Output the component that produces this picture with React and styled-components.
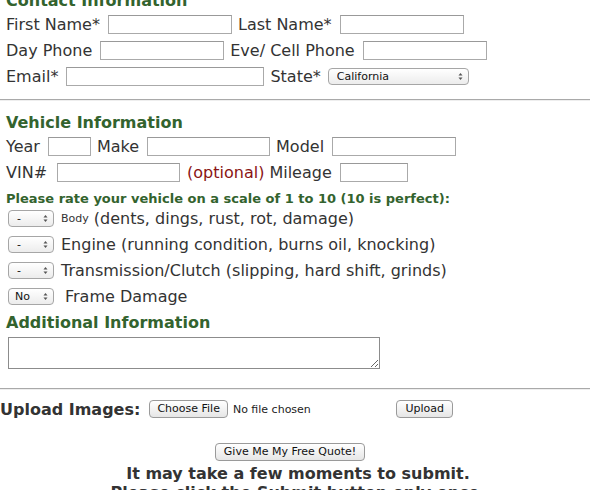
import React from 'react'
import styled, { createGlobalStyle } from 'styled-components'

const Global = createGlobalStyle`
  html, body {
    margin: 0;
    padding: 0;
    background: #fff;
  }
  body {
    font-family: "DejaVu Sans", Verdana, sans-serif;
    color: #333;
  }
`

const Page = styled.div`
  width: 590px;
  height: 490px;
  overflow: hidden;
`

const Section = styled.div`
  padding-left: 6px;
  margin-top: ${(p) => p.top || 0}px;
`

const Heading = styled.h3`
  margin: ${(p) => p.mt || 0}px 0 0 0;
  font-size: 16px;
  font-weight: bold;
  line-height: 20px;
  color: #33632e;
`

const Note = styled.div`
  margin-top: 6px;
  font-size: 13px;
  font-weight: bold;
  line-height: 13px;
  color: #33632e;
`

const Row = styled.div`
  display: flex;
  align-items: center;
  height: ${(p) => p.h || 26}px;
  font-size: 16px;
  white-space: nowrap;
`

const Label = styled.span`
  font-size: ${(p) => p.size || 16}px;
  color: ${(p) => p.color || '#333'};
  margin-left: ${(p) => p.ml || 0}px;
`

const Input = styled.input`
  box-sizing: border-box;
  width: ${(p) => p.w}px;
  height: 19px;
  margin: 0 6px 0 ${(p) => (p.ml == null ? 8 : p.ml)}px;
  padding: 0 3px;
  border: 1px solid #aaa;
  border-top-color: #999;
  background: #fff;
  font: 12px "DejaVu Sans", sans-serif;
  outline: none;
`

const SelectWrap = styled.span`
  position: relative;
  display: inline-flex;
  margin: 0 ${(p) => (p.mr == null ? 7 : p.mr)}px 0 ${(p) => p.ml || 0}px;
`

const Select = styled.select`
  appearance: none;
  -webkit-appearance: none;
  box-sizing: border-box;
  width: ${(p) => p.w}px;
  height: 17px;
  padding: 0 0 0 ${(p) => p.pl || 8}px;
  border: 1px solid #a6a6a6;
  border-radius: 4px;
  background: linear-gradient(#ffffff, #ececec);
  font: 11px "DejaVu Sans", sans-serif;
  color: #111;
  line-height: 15px;
  outline: none;
`

const Arrows = styled.svg`
  position: absolute;
  right: 6px;
  top: 4px;
  width: 5px;
  height: 9px;
  pointer-events: none;
`

const Rule = styled.hr`
  margin: ${(p) => p.mt}px 0 0 0;
  height: 0;
  border: none;
  border-top: 1px solid #a9a9a9;
  border-bottom: 1px solid #eeeeee;
`

const TextArea = styled.textarea`
  display: block;
  box-sizing: border-box;
  width: 372px;
  height: 32px;
  margin: 4px 0 0 2px;
  border: 1px solid #8c8c8c;
  resize: both;
  font: 12px "DejaVu Sans", sans-serif;
`

const UploadRow = styled.div`
  display: flex;
  align-items: center;
  height: 20px;
  margin-top: 9px;
`

const UploadTitle = styled.span`
  font-size: 16px;
  font-weight: bold;
  color: #333;
  margin-right: 9px;
`

const FileGroup = styled.div`
  display: flex;
  align-items: center;
  width: 247px;
`

const Button = styled.button`
  box-sizing: border-box;
  height: 18px;
  padding: 0 ${(p) => p.px || 7}px;
  border: 1px solid #9a9a9a;
  border-radius: 4px;
  background: linear-gradient(#ffffff, #e6e6e6);
  font: 11px "DejaVu Sans", sans-serif;
  color: #111;
  line-height: 16px;
`

const FileNote = styled.span`
  font-size: 11px;
  color: #222;
  margin-left: 5px;
`

const Submit = styled.div`
  display: flex;
  flex-direction: column;
  align-items: center;
  margin-top: 24px;
`

const SubmitText = styled.div`
  margin-top: 3px;
  padding-left: 6px;
  font-size: 16px;
  font-weight: bold;
  line-height: 19px;
  color: #333;
  text-align: center;
`

const UpDown = () => (
  <Arrows viewBox="0 0 5 9">
    <path d="M0.5 3.5 L2.5 1 L4.5 3.5 Z" fill="#555" />
    <path d="M0.5 5.5 L2.5 8 L4.5 5.5 Z" fill="#555" />
  </Arrows>
)

const Drop = ({ w, value, pl, ml, mr }) => (
  <SelectWrap ml={ml} mr={mr}>
    <Select w={w} pl={pl} defaultValue={value}>
      <option>{value}</option>
    </Select>
    <UpDown />
  </SelectWrap>
)

export default function App() {
  return (
    <Page>
      <Global />
      <Section top={-9}>
        <Heading>Contact Information</Heading>
        <Row>
          <Label>First Name*</Label>
          <Input w={124} />
          <Label>Last Name*</Label>
          <Input w={124} />
        </Row>
        <Row>
          <Label>Day Phone</Label>
          <Input w={124} />
          <Label>Eve/ Cell Phone</Label>
          <Input w={124} />
        </Row>
        <Row>
          <Label>Email*</Label>
          <Input w={198} />
          <Label>State*</Label>
          <Drop w={141} value="California" ml={7} />
        </Row>
      </Section>

      <Rule mt={10} />

      <Section>
        <Heading mt={12}>Vehicle Information</Heading>
        <Row>
          <Label>Year</Label>
          <Input w={43} />
          <Label>Make</Label>
          <Input w={123} />
          <Label>Model</Label>
          <Input w={124} />
        </Row>
        <Row h={27}>
          <Label>VIN#</Label>
          <Input w={123} ml={10} />
          <Label ml={1} color="#8a1414">(optional)</Label>
          <Label ml={5}>Mileage</Label>
          <Input w={68} />
        </Row>
        <Note>Please rate your vehicle on a scale of 1 to 10 (10 is perfect):</Note>
        <Row>
          <Drop w={46} value="-" ml={2} />
          <Label size={11}>Body</Label>
          <Label>&nbsp;(dents, dings, rust, rot, damage)</Label>
        </Row>
        <Row>
          <Drop w={46} value="-" ml={2} />
          <Label>Engine (running condition, burns oil, knocking)</Label>
        </Row>
        <Row>
          <Drop w={46} value="-" ml={2} />
          <Label>Transmission/Clutch (slipping, hard shift, grinds)</Label>
        </Row>
        <Row>
          <Drop w={46} value="No" pl={6} ml={2} mr={11} />
          <Label>Frame Damage</Label>
        </Row>
        <Heading mt={4}>Additional Information</Heading>
        <TextArea />
      </Section>

      <Rule mt={19} />

      <UploadRow>
        <UploadTitle>Upload Images:</UploadTitle>
        <FileGroup>
          <Button px={7}>Choose File</Button>
          <FileNote>No file chosen</FileNote>
        </FileGroup>
        <Button px={8}>Upload</Button>
      </UploadRow>

      <Submit>
        <Button px={8} style={{ marginRight: 10 }}>Give Me My Free Quote!</Button>
        <SubmitText>
          It may take a few moments to submit.
          <br />
          Please click the Submit button only once.
        </SubmitText>
      </Submit>
    </Page>
  )
}
